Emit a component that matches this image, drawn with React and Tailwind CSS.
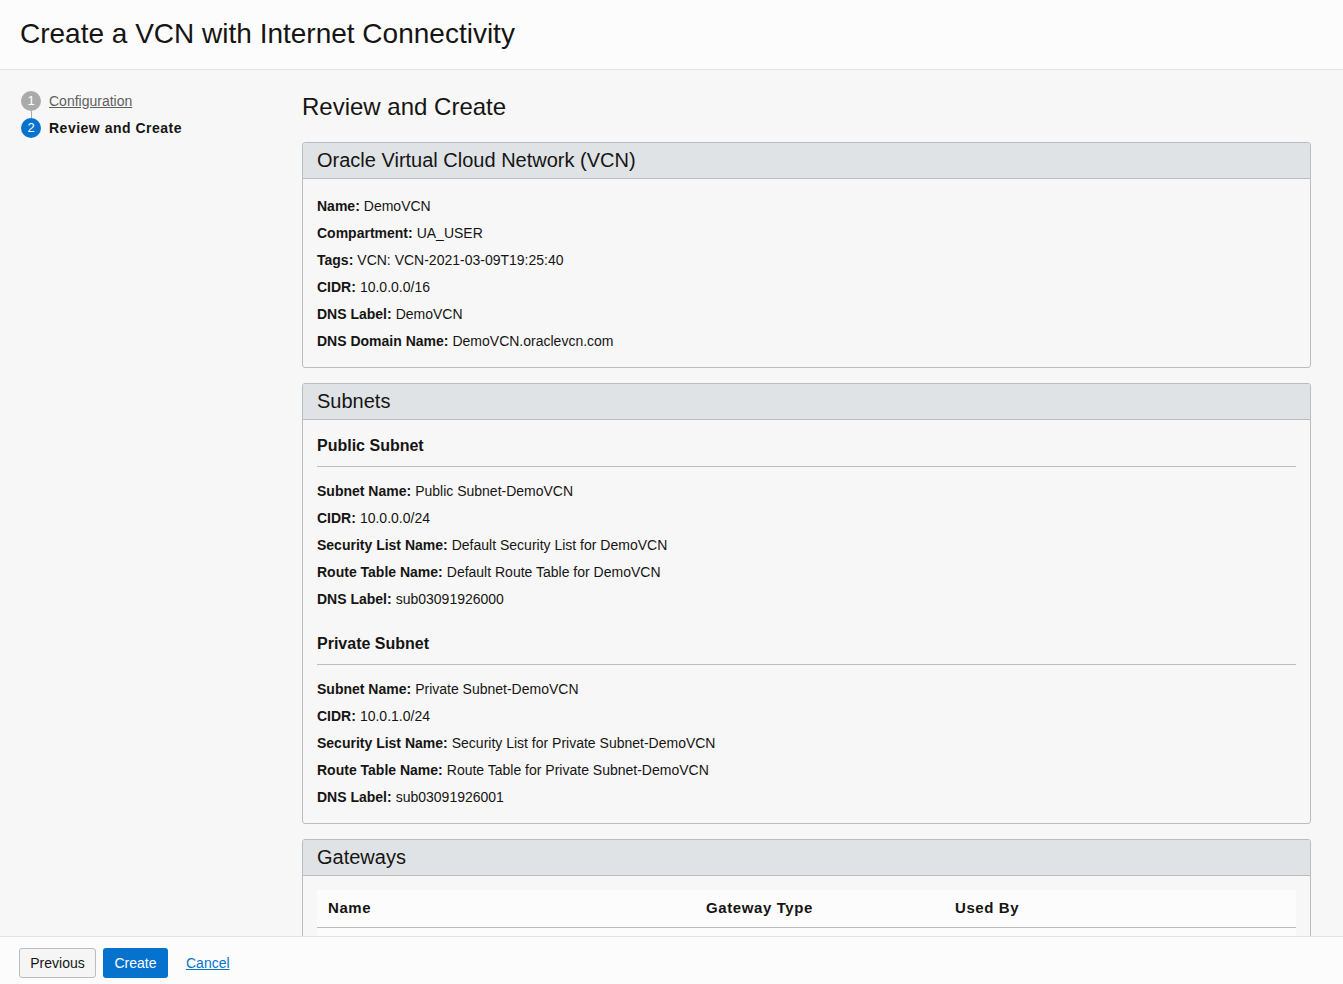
import React from 'react';

const VCN_ROWS = [
  ['Name:', 'DemoVCN'],
  ['Compartment:', 'UA_USER'],
  ['Tags:', 'VCN: VCN-2021-03-09T19:25:40'],
  ['CIDR:', '10.0.0.0/16'],
  ['DNS Label:', 'DemoVCN'],
  ['DNS Domain Name:', 'DemoVCN.oraclevcn.com'],
];

const SUBNETS = [
  {
    title: 'Public Subnet',
    rows: [
      ['Subnet Name:', 'Public Subnet-DemoVCN'],
      ['CIDR:', '10.0.0.0/24'],
      ['Security List Name:', 'Default Security List for DemoVCN'],
      ['Route Table Name:', 'Default Route Table for DemoVCN'],
      ['DNS Label:', 'sub03091926000'],
    ],
  },
  {
    title: 'Private Subnet',
    rows: [
      ['Subnet Name:', 'Private Subnet-DemoVCN'],
      ['CIDR:', '10.0.1.0/24'],
      ['Security List Name:', 'Security List for Private Subnet-DemoVCN'],
      ['Route Table Name:', 'Route Table for Private Subnet-DemoVCN'],
      ['DNS Label:', 'sub03091926001'],
    ],
  },
];

function Row({ label, value }) {
  return (
    <div className="h-[27px] flex items-center text-[14px] text-[#161513]">
      <span className="font-bold mr-[4px]">{label}</span>
      <span>{value}</span>
    </div>
  );
}

function Panel({ title, children, className = '' }) {
  return (
    <section className={`border border-[#b9bdc1] rounded-[3px] bg-[#f7f7f7] ${className}`}>
      <div className="h-[36px] bg-[#dfe3e6] border-b border-[#b9bdc1] rounded-t-[3px] px-[14px] pb-[1px] flex items-center">
        <h3 className="text-[20px] text-[#161513] leading-none">{title}</h3>
      </div>
      {children}
    </section>
  );
}

export default function App() {
  return (
    <div className="h-[984px] flex flex-col bg-[#f7f7f7] overflow-hidden" style={{ fontFamily: '"Liberation Sans", Arial, sans-serif' }}>

      {/* Header */}
      <header className="h-[70px] flex-shrink-0 bg-[#fcfcfc] border-b border-[#e3e3e3] px-[20px] flex items-center">
        <h1 className="text-[28px] text-[#161513] leading-none pb-[2px]">Create a VCN with Internet Connectivity</h1>
      </header>

      <div className="flex-1 min-h-0 flex overflow-hidden">

        {/* Steps */}
        <nav className="w-[302px] flex-shrink-0 pl-[21px] pt-[21px]">
          <div className="flex items-center h-[20px]">
            <span className="w-[20px] h-[20px] rounded-full bg-[#aaaaaa] text-white text-[13px] flex items-center justify-center">1</span>
            <a href="#" className="ml-[8px] text-[14px] text-[#5f5f5f] underline">Configuration</a>
          </div>
          <div className="w-[20px] flex justify-center">
            <span className="w-px h-[7px] bg-[#aaaaaa]" />
          </div>
          <div className="flex items-center h-[20px]">
            <span className="w-[20px] h-[20px] rounded-full bg-[#0572ce] text-white text-[13px] flex items-center justify-center">2</span>
            <span className="ml-[8px] text-[14px] font-bold tracking-[0.5px] text-[#161513]">Review and Create</span>
          </div>
        </nav>

        {/* Main */}
        <main className="flex-1 pr-[32px] pt-[23px]">
          <h2 className="text-[24px] text-[#161513] leading-[28px]">Review and Create</h2>

          <Panel title="Oracle Virtual Cloud Network (VCN)" className="mt-[21px]">
            <div className="px-[14px] pt-[14px] pb-[12px]">
              {VCN_ROWS.map(([l, v]) => <Row key={l} label={l} value={v} />)}
            </div>
          </Panel>

          <Panel title="Subnets" className="mt-[15px]">
            <div className="px-[14px] pt-[12px] pb-[12px]">
              {SUBNETS.map((s, i) => (
                <div key={s.title} className={i > 0 ? 'mt-[17px]' : ''}>
                  <h4 className="h-[27px] flex items-center text-[16px] font-bold text-[#161513]">{s.title}</h4>
                  <div className="mt-[7px] h-px bg-[#b9bdc1]" />
                  <div className="mt-[11px]">
                    {s.rows.map(([l, v]) => <Row key={l} label={l} value={v} />)}
                  </div>
                </div>
              ))}
            </div>
          </Panel>

          <Panel title="Gateways" className="mt-[15px]">
            <div className="px-[14px] pt-[14px] pb-[13px]">
              <table className="w-full border-collapse bg-[#fcfcfc]">
                <thead>
                  <tr className="h-[37px] border-b border-[#b9bdc1] text-left text-[15px] tracking-[0.6px] text-[#161513]">
                    <th className="w-[378px] pl-[11px] font-bold">Name</th>
                    <th className="w-[249px] pl-[11px] font-bold">Gateway Type</th>
                    <th className="pl-[11px] font-bold">Used By</th>
                  </tr>
                </thead>
                <tbody>
                  <tr className="h-[37px]">
                    <td />
                    <td />
                    <td />
                  </tr>
                </tbody>
              </table>
            </div>
          </Panel>
        </main>
      </div>

      {/* Footer */}
      <footer className="h-[48px] flex-shrink-0 bg-[#fcfcfc] border-t border-[#e3e3e3] px-[19px] pt-[5px] flex items-center">
        <button className="h-[30px] w-[77px] border border-[#b9bdc1] rounded-[3px] bg-[#f5f5f5] text-[14px] text-[#161513]">Previous</button>
        <button className="ml-[7px] h-[30px] w-[65px] rounded-[3px] bg-[#0572ce] text-[14px] text-white">Create</button>
        <a href="#" className="ml-[18px] text-[14px] text-[#0572ce] underline">Cancel</a>
      </footer>
    </div>
  );
}
